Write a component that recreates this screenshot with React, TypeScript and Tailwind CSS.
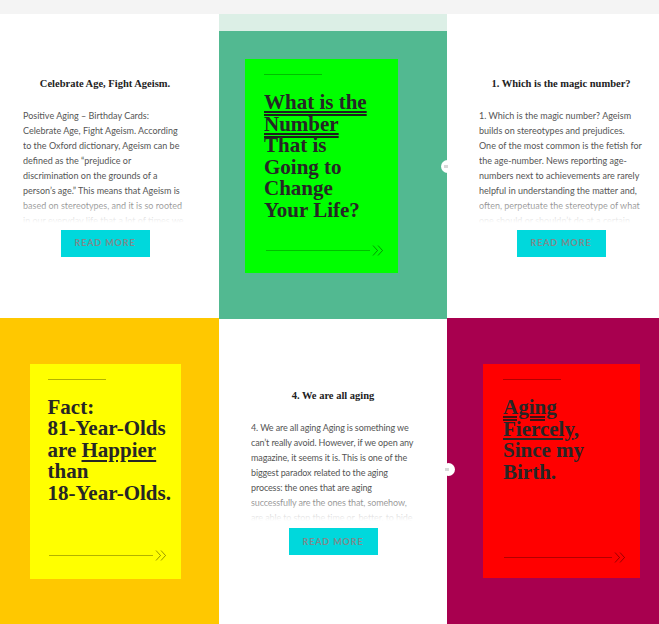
import React from 'react';

type CardProps = {
  className: string;
  lineClass: string;
  bottomClass: string;
  children: React.ReactNode;
};

const Chevrons = () => (
  <svg width="12" height="11" viewBox="0 0 12 11" fill="none" stroke="currentColor" strokeWidth="1">
    <polyline points="1,0.5 5.5,5.5 1,10.5" />
    <polyline points="6,0.5 10.5,5.5 6,10.5" />
  </svg>
);

// coloured poster card
const Poster: React.FC<CardProps> = ({ className, lineClass, bottomClass, children }) => (
  <div className={`flex shrink-0 flex-col ${className}`}>
    <div className={`mt-[15px] h-px w-[58px] ${lineClass}`} />
    <h2 className="mt-[17px] font-['Liberation_Serif',serif] text-[21px] leading-[21.6px] font-bold whitespace-nowrap text-[#262626]">
      {children}
    </h2>
    <div className={`mt-auto flex items-center ${bottomClass}`}>
      <div className={`h-px flex-1 ${lineClass}`} />
      <span className="ml-[2px] text-black/40">
        <Chevrons />
      </span>
    </div>
  </div>
);

type ExcerptProps = {
  title: string;
  text: string;
  boxClass: string;
  textClass?: string;
  className?: string;
};

const Excerpt: React.FC<ExcerptProps> = ({ title, text, boxClass, textClass = '', className = '' }) => (
  <div className={`flex h-full flex-col items-center justify-center bg-white px-8 ${className}`}>
    <h3 className="text-center font-['Liberation_Serif',serif] text-[10.5px] leading-4 font-bold text-[#222]">
      {title}
    </h3>
    <div className={`relative mt-4 w-full overflow-hidden ${boxClass}`}>
      <p className={`font-[Lato,sans-serif] text-[9px] leading-[15px] text-[#555] ${textClass}`}>{text}</p>
      <div className="absolute inset-x-0 bottom-0 h-[30px] bg-linear-to-b from-white/0 to-white" />
    </div>
    <a className="mt-[7px] flex h-[27px] w-[89px] items-center justify-center bg-[#00d8dc] font-[Lato,sans-serif] text-[9px] font-bold tracking-[0.9px] text-[#7d8b8d] uppercase">
      Read more
    </a>
  </div>
);

const Dot = ({ className }: { className: string }) => (
  <div className={`absolute flex h-[13px] w-[13px] items-center rounded-full bg-white pl-[3px] ${className}`}>
    <div className="h-[3px] w-[4px] bg-[#d8d8d8]" />
  </div>
);

export default function App() {
  return (
    <div className="h-[624px] w-full overflow-hidden bg-[#f4f4f4]">
      <div className="h-[14px]" />
      <div className="relative -ml-[9px] grid w-[684px] grid-cols-[228px_228px_228px] grid-rows-[304px_306px]">
        <Excerpt
          title="Celebrate Age, Fight Ageism."
          boxClass="h-[115px]"
          text="Positive Aging – Birthday Cards: Celebrate Age, Fight Ageism. According to the Oxford dictionary, Ageism can be defined as the “prejudice or discrimination on the grounds of a person’s age.” This means that Ageism is based on stereotypes, and it is so rooted in our everyday life that a lot of times we don’t even notice it."
        />

        <div className="flex flex-col">
          <div className="h-[17px] bg-[#dcefe6]" />
          <div className="flex-1 bg-[#52b991] pt-[28px] pl-[26px]">
            <Poster
              className="h-[214px] w-[153px] bg-[#00ff00] pr-[14px] pl-[19px]"
              lineClass="bg-black/25"
              bottomClass="mb-[17px] pl-[2px]"
            >
              <span className="underline decoration-double decoration-[#1d1d1d] underline-offset-2">
                What is the
                <br />
                Number
              </span>
              <br />
              That is
              <br />
              Going to
              <br />
              Change
              <br />
              Your Life?
            </Poster>
          </div>
        </div>

        <Excerpt
          title="1. Which is the magic number?"
          boxClass="h-[115px]"
          text="1. Which is the magic number? Ageism builds on stereotypes and prejudices. One of the most common is the fetish for the age-number. News reporting age-numbers next to achievements are rarely helpful in understanding the matter and, often, perpetuate the stereotype of what one should or shouldn’t do at a certain age."
        />

        <div className="flex items-center justify-center bg-[#ffc800]">
          <Poster
            className="h-[215px] w-[151px] bg-[#ffff00] pr-[14px] pl-[18px]"
            lineClass="bg-black/30"
            bottomClass="mb-[18px] pl-[1px]"
          >
            Fact:
            <br />
            81-Year-Olds
            <br />
            are <span className="underline decoration-2 underline-offset-[3px]">Happier</span>
            <br />
            than
            <br />
            18-Year-Olds.
          </Poster>
        </div>

        <Excerpt
          title="4. We are all aging"
          boxClass="h-[101px]"
          textClass="tracking-[-0.12px]"
          className="border-t border-[#52b991]"
          text="4. We are all aging Aging is something we can’t really avoid. However, if we open any magazine, it seems it is. This is one of the biggest paradox related to the aging process: the ones that are aging successfully are the ones that, somehow, are able to stop the time or, better, to hide it."
        />

        <div className="flex items-center bg-[#a8004f] pl-[36px]">
          <Poster
            className="h-[214px] w-[157px] bg-[#ff0000] pr-[14px] pl-[20px]"
            lineClass="bg-black/30"
            bottomClass="mb-[15px] pl-[1px]"
          >
            <span className="underline decoration-double decoration-[#3a1414] underline-offset-2">Aging</span>
            <br />
            <span className="underline decoration-2 underline-offset-2">Fiercely</span>,
            <br />
            Since my
            <br />
            Birth.
          </Poster>
        </div>

        <Dot className="top-[146px] left-[450px]" />
        <Dot className="top-[449px] left-[451px]" />
      </div>
    </div>
  );
}
